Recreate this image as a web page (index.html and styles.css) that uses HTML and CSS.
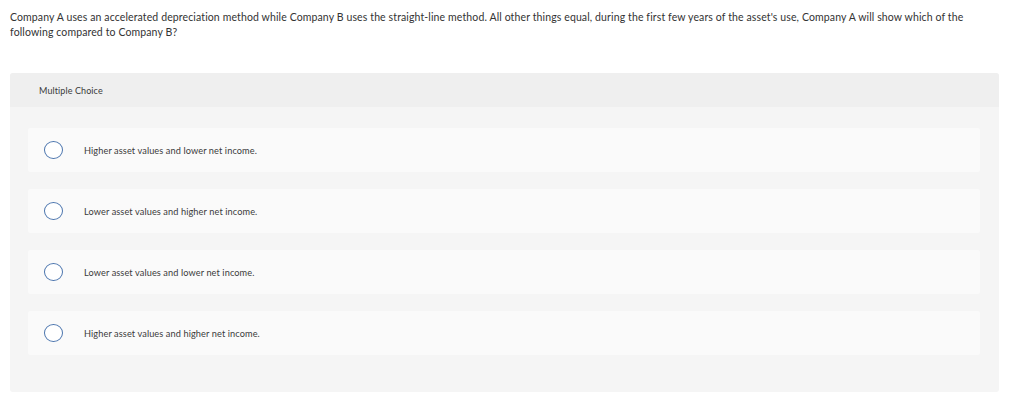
FILE: index.html
```html
<!DOCTYPE html>
<html lang="en">
<head>
    <meta charset="UTF-8">
    <title>Multiple Choice</title>
    <link rel="stylesheet" href="styles.css">
</head>
<body>
    <div class="question-text">
        Company A uses an accelerated depreciation method while Company B uses the straight-line method. All other things equal, during the first few years of the asset's use, Company A will show which of the following compared to Company B?
    </div>

    <div class="choice-panel">
        <div class="choice-header">Multiple Choice</div>
        <div class="choice-list">
            <div class="choice-option">
                <span class="radio"></span>
                <span class="choice-label">Higher asset values and lower net income.</span>
            </div>
            <div class="choice-option">
                <span class="radio"></span>
                <span class="choice-label">Lower asset values and higher net income.</span>
            </div>
            <div class="choice-option">
                <span class="radio"></span>
                <span class="choice-label">Lower asset values and lower net income.</span>
            </div>
            <div class="choice-option">
                <span class="radio"></span>
                <span class="choice-label">Higher asset values and higher net income.</span>
            </div>
        </div>
    </div>
</body>
</html>
```

FILE: styles.css
```css
* {
    margin: 0;
    padding: 0;
    box-sizing: border-box;
}

body {
    background-color: #fff;
    font-family: Lato, "Open Sans", Arial, sans-serif;
    color: #333;
    padding: 10px 25px 0 10px;
}

.question-text {
    font-size: 10.5px;
    line-height: 14.5px;
    max-width: 960px;
    letter-spacing: 0.12px;
}

.choice-panel {
    margin-top: 34px;
    background-color: #f5f5f5;
    border-radius: 3px;
    overflow: hidden;
}

.choice-header {
    background-color: #efefef;
    height: 34px;
    padding-left: 29px;
    display: flex;
    align-items: center;
    font-size: 9px;
    color: #3a3a3a;
    letter-spacing: 0.1px;
}

.choice-list {
    display: flex;
    flex-direction: column;
    gap: 17px;
    padding: 21px 19px 37px 18px;
}

.choice-option {
    background-color: #fafafa;
    border-radius: 2px;
    height: 44px;
    display: flex;
    align-items: center;
    padding-left: 16px;
}

.radio {
    width: 19px;
    height: 18px;
    border: 1px solid #4a74ad;
    border-radius: 50%;
    background-color: #fff;
    flex-shrink: 0;
}

.choice-label {
    margin-left: 21px;
    font-size: 9.2px;
    color: #3a3a3a;
    letter-spacing: 0.1px;
}
```
